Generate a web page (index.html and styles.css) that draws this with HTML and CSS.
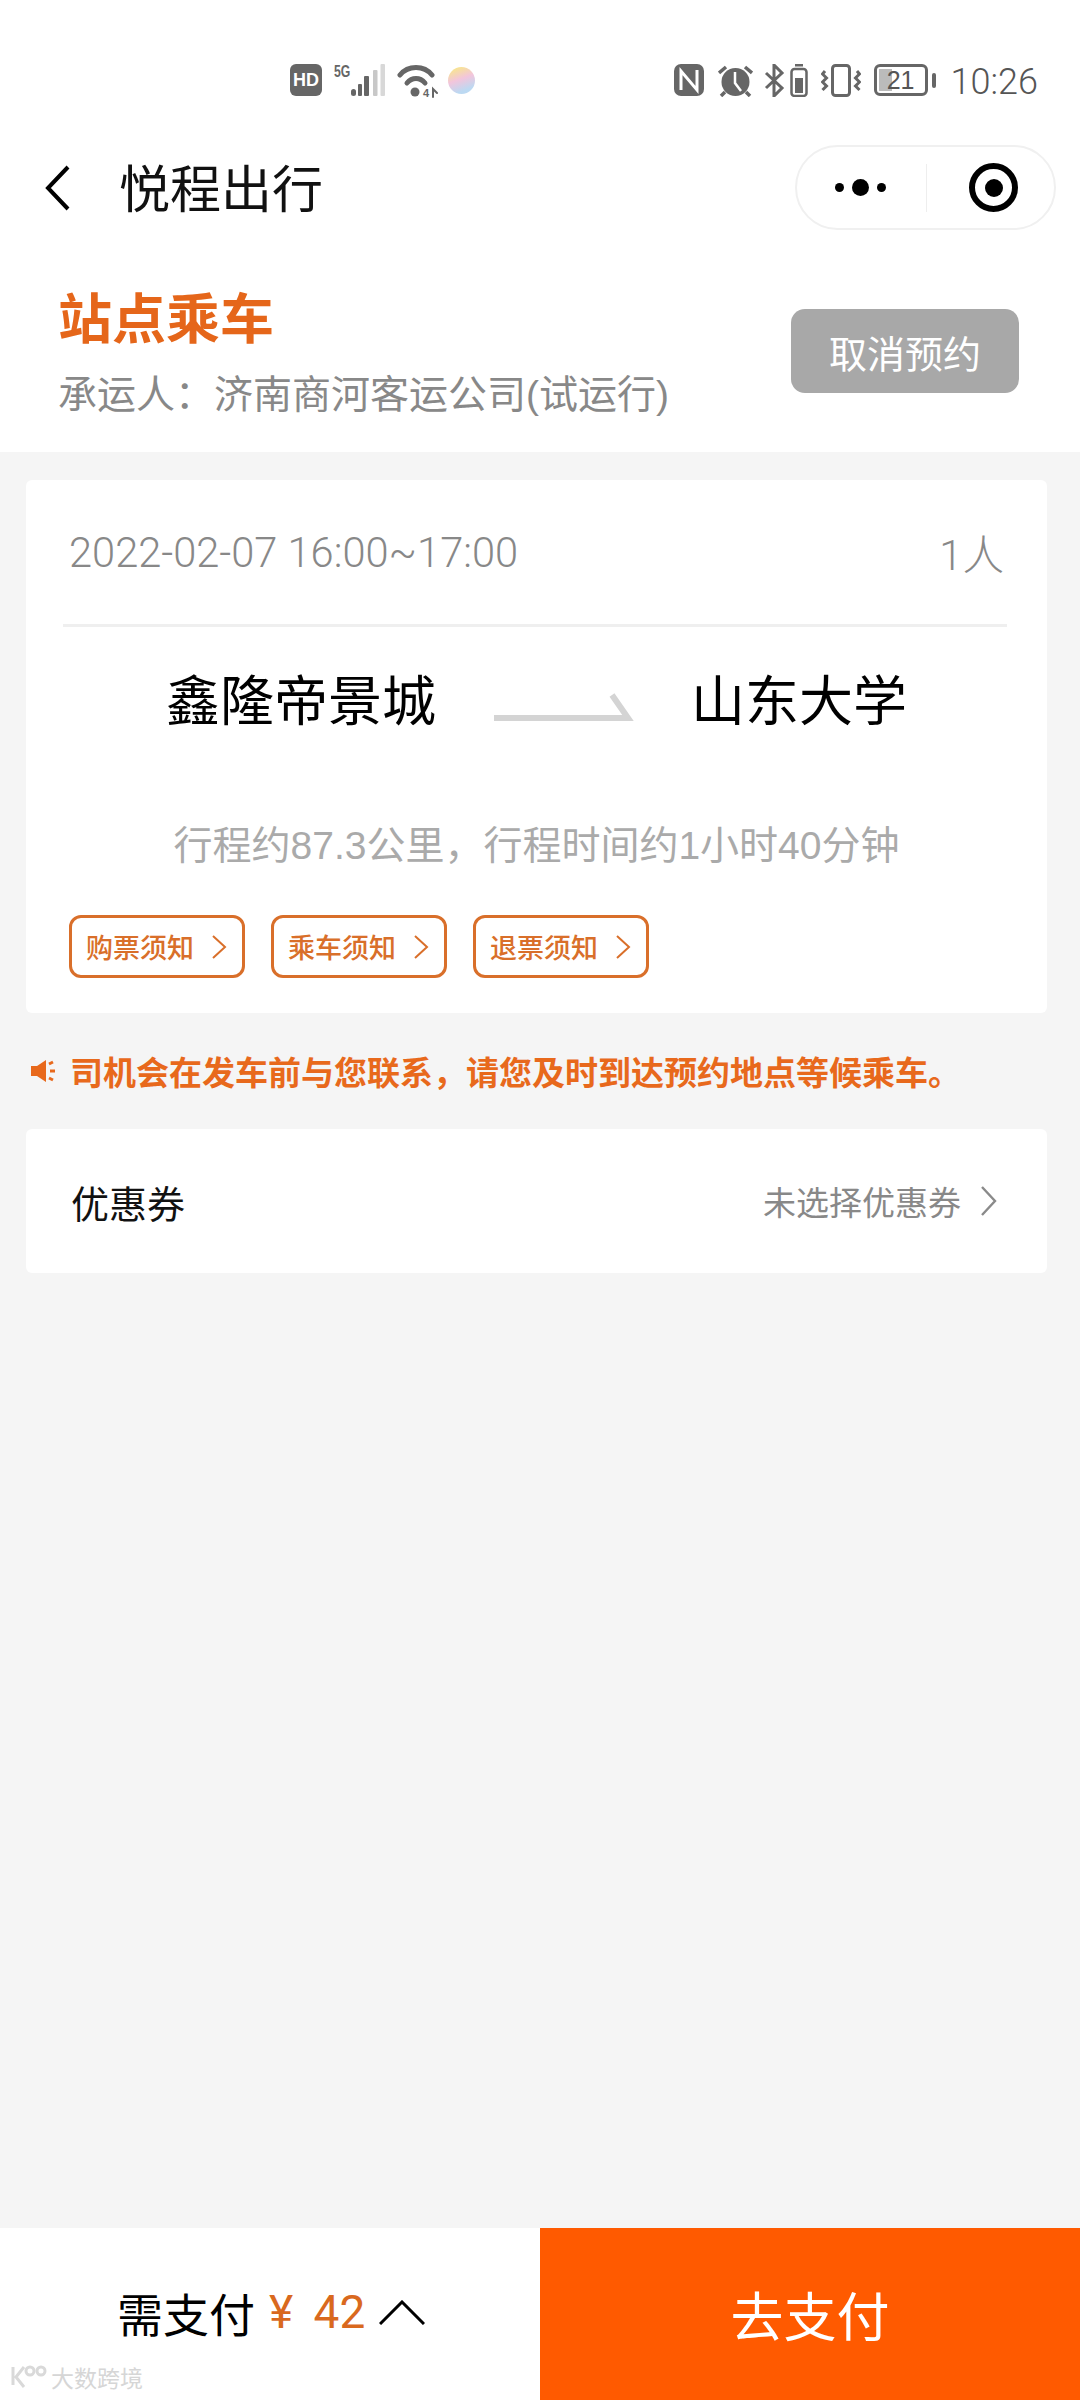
FILE: index.html
```html
<!DOCTYPE html>
<html lang="zh-CN">
<head>
<meta charset="utf-8">
<title>悦程出行</title>
<link rel="stylesheet" href="styles.css">
</head>
<body>
<div class="phone">
  <div class="top">
    <div class="status">
      <div class="status-mid">
        <span class="hd">HD</span>
        <span class="sig-wrap"><span class="five">5G</span>
          <svg class="sig" width="34" height="32" viewBox="0 0 34 32"><rect x="0" y="25" width="5" height="7" rx="2.5" fill="#666"/><rect x="7" y="20" width="4" height="12" rx="1" fill="#666"/><rect x="13" y="12" width="5" height="20" rx="1" fill="#666"/><rect x="22" y="6" width="4.500" height="26" rx="1" fill="#c8c8c8"/><rect x="29.5" y="0" width="4.5" height="32" rx="1" fill="#d8d8d8"/></svg></span>
        <svg class="wifi" width="41" height="38" viewBox="0 0 41 38" fill="none" stroke="#666" stroke-width="5" stroke-linecap="round"><path d="M3 11C11 1 27 1 35 11"/><path d="M10 19C15 13 23 13 28 19"/><circle cx="18" cy="28" r="4.5" fill="#666" stroke="none"/><text x="26" y="33" class="net-text">4</text><path d="M36 33V25l4 4" stroke-width="2"/></svg>
        <span class="ball"></span>
      </div>
      <div class="status-right">
        <svg class="ic-n" width="30" height="32" viewBox="0 0 30 32"><rect x="0" y="0" width="30" height="32" rx="7" fill="#666"/><path d="M7 26V7l16 19V6" fill="none" stroke="#fff" stroke-width="3"/></svg>
        <svg class="ic-alarm" width="35" height="33" viewBox="0 0 35 33"><circle cx="17.500" cy="18" r="14" fill="#666"/><path d="M17 8v11l6 8" fill="none" stroke="#fff" stroke-width="2.500"/><path d="M1 9l7-6M34 9l-7-6M7 28l-4 4M28 28l4 4" stroke="#666" stroke-width="3.500"/></svg>
        <svg class="ic-bt" width="21" height="33" viewBox="0 0 21 33" fill="none" stroke="#666" stroke-width="3"><path d="M2 9l16 15-8 8V1l8 8L2 24"/></svg>
        <svg class="ic-mini" width="18" height="33" viewBox="0 0 18 33"><rect x="5" y="0" width="8" height="2.500" fill="#666"/><rect x="1.500" y="5" width="15" height="27" rx="3" fill="none" stroke="#666" stroke-width="2.500"/><rect x="5" y="14" width="8" height="15" fill="#666"/></svg>
        <svg class="ic-vib" width="40" height="33" viewBox="0 0 40 33" fill="none" stroke="#666" stroke-width="3"><rect x="11.500" y="1.500" width="17" height="30" rx="3"/><path d="M4 7L1.500 10l4 4-4 4 4 4-4 4M36 7l2.500 3-4 4 4 4-4 4 4 4" stroke-width="3"/></svg>
        <span class="battery"><span class="batt-fill"></span><span class="batt-num">21</span></span>
        <span class="batt-tip"></span>
        <span class="time">10:26</span>
      </div>
    </div>
    <div class="nav">
      <svg class="back" width="26" height="46" viewBox="0 0 26 46" fill="none" stroke="#000" stroke-width="4"><path d="M23 2L3 23l20 21"/></svg>
      <span class="nav-title">悦程出行</span>
      <div class="capsule">
        <span class="dots"><i class="dot"></i><i class="dot big"></i><i class="dot"></i></span>
        <span class="cap-line"></span>
        <span class="target"><i></i></span>
      </div>
    </div>
    <div class="head">
      <div>
        <div class="head-title">站点乘车</div>
        <div class="carrier">承运人：济南商河客运公司(试运行)</div>
      </div>
      <button class="cancel">取消预约</button>
    </div>
  </div>

  <main class="content">
    <section class="card trip">
      <div class="trip-top"><span>2022-02-07 16:00~17:00</span><span>1人</span></div>
      <div class="route">
        <span class="place">鑫隆帝景城</span>
        <svg class="arrow" width="140" height="30" viewBox="0 0 140 30" fill="none" stroke="#d4d4d4" stroke-width="6"><path d="M0 26H134L118 3"/></svg>
        <span class="place">山东大学</span>
      </div>
      <div class="summary">行程约87.3公里，行程时间约1小时40分钟</div>
      <div class="tags">
        <span class="tag">购票须知<svg width="15" height="24" viewBox="0 0 15 24" fill="none" stroke="#d96f2a" stroke-width="2"><path d="M1 1l12 11L1 23"/></svg></span>
        <span class="tag">乘车须知<svg width="15" height="24" viewBox="0 0 15 24" fill="none" stroke="#d96f2a" stroke-width="2"><path d="M1 1l12 11L1 23"/></svg></span>
        <span class="tag">退票须知<svg width="15" height="24" viewBox="0 0 15 24" fill="none" stroke="#d96f2a" stroke-width="2"><path d="M1 1l12 11L1 23"/></svg></span>
      </div>
    </section>
    <div class="notice">
      <svg width="24" height="22" viewBox="0 0 24 22"><path d="M0 6h6L15 0v22L6 16H0z" fill="#e8691c"/><path d="M18 4l4-2M19 11h5M18 18l4 2" stroke="#e8691c" stroke-width="3"/></svg>
      <span>司机会在发车前与您联系，请您及时到达预约地点等候乘车。</span>
    </div>
    <section class="card coupon">
      <span class="coupon-name">优惠券</span>
      <span class="coupon-value">未选择优惠券<svg width="17" height="32" viewBox="0 0 17 32" fill="none" stroke="#8a8a8a" stroke-width="2.400"><path d="M2 2l13 14L2 30"/></svg></span>
    </section>
  </main>

  <footer class="bar">
    <div class="pay-info">
      <span>需支付</span><span class="price">¥ 42</span>
      <svg width="46" height="25" viewBox="0 0 46 25" fill="none" stroke="#000" stroke-width="3"><path d="M1 24L23 2l22 22"/></svg>
      <span class="mark"><svg width="38" height="24" viewBox="0 0 38 24" fill="none" stroke="#d9d9d9" stroke-width="3"><path d="M3 2v18M14 2L6 12l8 10"/><circle cx="20" cy="6" r="4"/><circle cx="31" cy="6" r="4"/></svg><span>大数跨境</span></span>
    </div>
    <button class="pay">去支付</button>
  </footer>
</div>
</body>
</html>
```
FILE: styles.css
```css
* { box-sizing: border-box; }
html, body { margin: 0; padding: 0; }
body { font-family: "Liberation Sans", "Noto Sans CJK SC", sans-serif; background: #f5f5f5; }
.phone { width: 1080px; height: 2400px; display: flex; flex-direction: column; background: #f5f5f5; }
.top { background: #fff; height: 452px; flex: none; }
.status { height: 140px; padding: 56px 42px 0 290px; display: flex; align-items: flex-start; justify-content: space-between; }
.status-mid, .status-right { display: flex; align-items: center; height: 48px; }
.status-mid { gap: 12px; }
.hd { width: 32px; height: 32px; border-radius: 6px; background: #666; color: #fff; font: bold 18px "Liberation Sans", sans-serif; display: flex; align-items: center; justify-content: center; }
.sig-wrap { position: relative; width: 51px; height: 32px; display: flex; align-items: flex-end; justify-content: flex-end; }
.five { position: absolute; left: 0; top: -1px; font: bold 17px/17px "Liberation Sans", sans-serif; color: #666; transform: scaleX(.72); transform-origin: left; }
.wifi { margin: 5px 0 0 0; }
.net-text { font: bold 11px "Liberation Sans", sans-serif; fill: #666; stroke: none; }
.ball { width: 27px; height: 27px; border-radius: 50%; background: linear-gradient(160deg, #f8e58f 10%, #f2c5dc 45%, #bcd9f2 80%); margin-left: -2px; }
.ic-alarm { margin-left: 14px; }
.ic-bt { margin-left: 11px; }
.ic-mini { margin-left: 5px; }
.ic-vib { margin-left: 13px; }
.battery { position: relative; width: 54px; height: 32px; border: 3px solid #666; border-radius: 6px; margin-left: 13px; display: flex; align-items: center; justify-content: center; overflow: hidden; }
.batt-fill { position: absolute; left: 2px; top: 2px; bottom: 2px; width: 13px; background: #bbb; }
.batt-num { position: relative; font: 25px "Liberation Sans", sans-serif; color: #555; }
.batt-tip { width: 4px; height: 15px; background: #666; border-radius: 2px; margin: 0 15px 0 4px; }
.time { font: 300 36px "Roboto", sans-serif; color: #555; margin-top: 3px; }
.nav { height: 96px; display: flex; align-items: center; position: relative; padding-left: 45px; }
.back { flex: none; }
.nav-title { font-size: 51px; color: #111; margin-left: 48px; line-height: 56px; padding-top: 6px; }
.capsule { position: absolute; left: 795px; top: 5px; width: 261px; height: 85px; border: 2px solid #f0f0f0; border-radius: 43px; background: #fff; display: flex; align-items: center; padding-left: 38px; }
.dots { display: flex; align-items: center; gap: 8px; }
.dot { width: 9px; height: 9px; border-radius: 50%; background: #000; }
.dot.big { width: 17px; height: 17px; }
.cap-line { width: 1px; height: 48px; background: #eee; margin-left: 40px; }
.target { width: 49px; height: 49px; border: 6px solid #000; border-radius: 50%; margin-left: 42px; display: flex; align-items: center; justify-content: center; }
.target i { width: 18px; height: 18px; border-radius: 50%; background: #000; }
.head { display: flex; justify-content: space-between; padding: 54px 61px 0 58px; height: 216px; background: #fff; }
.head-title { font-size: 54px; font-weight: bold; color: #e5661a; line-height: 60px; }
.carrier { font-size: 39px; color: #888; line-height: 46px; margin-top: 22px; white-space: nowrap; }
.cancel { width: 228px; height: 84px; margin-top: 19px; border: 0; border-radius: 14px; background: #a8a8a8; color: #fff; font: 38px "Liberation Sans", "Noto Sans CJK SC", sans-serif; padding: 0; }
.content { flex: 1; padding: 28px 33px 0 26px; }
.card { background: #fff; border-radius: 6px; }
.trip { height: 533px; padding: 0 40px 0 37px; }
.trip-top { height: 147px; border-bottom: 3px solid #efefef; display: flex; justify-content: space-between; align-items: center; font: 300 41.6px "Roboto", "Noto Sans CJK SC", sans-serif; color: #888; padding: 0 3px 0 6px; }
.route { display: flex; align-items: center; height: 96px; margin-top: 27px; padding-left: 103px; }
.place { font-size: 54px; color: #000; line-height: 96px; white-space: nowrap; }
.arrow { margin: 10px 57px 0 58px; flex: none; }
.summary { text-align: center; font-size: 39px; color: #aaa; margin-top: 73px; line-height: 46px; white-space: nowrap; padding-left: 3px; }
.tags { display: flex; gap: 26px; margin-top: 46px; padding-left: 6px; }
.tag { width: 176px; height: 63px; border: 3px solid #d96f2a; border-radius: 12px; color: #d96f2a; font-size: 27px; font-weight: 500; display: flex; align-items: center; justify-content: space-between; padding: 0 15px 0 14px; white-space: nowrap; }
.notice { height: 116px; display: flex; align-items: center; gap: 15px; font-size: 33px; font-weight: bold; color: #e8691c; padding: 0 0 0 5px; margin-right: -27px; white-space: nowrap; }
.coupon { height: 144px; display: flex; justify-content: space-between; align-items: center; padding: 0 50px 0 45px; }
.coupon-name { font-size: 38px; color: #111; }
.coupon-value { font-size: 33px; color: #888; display: flex; align-items: center; gap: 19px; }
.bar { height: 172px; flex: none; display: flex; background: #fff; }
.pay-info { position: relative; width: 540px; display: flex; align-items: center; padding: 0 0 4px 117px; gap: 14px; font-size: 46px; color: #000; }
.price { color: #d9691e; font-family: "Roboto", "Noto Sans CJK SC", sans-serif; white-space: pre; word-spacing: 9px; }
.mark { position: absolute; left: 10px; bottom: 6px; display: flex; align-items: center; gap: 3px; font-size: 23px; color: #d6d6d6; }
.pay { flex: 1; border: 0; background: #ff5a00; color: #fff; font: 53px "Liberation Sans", "Noto Sans CJK SC", sans-serif; padding: 0; }
```
